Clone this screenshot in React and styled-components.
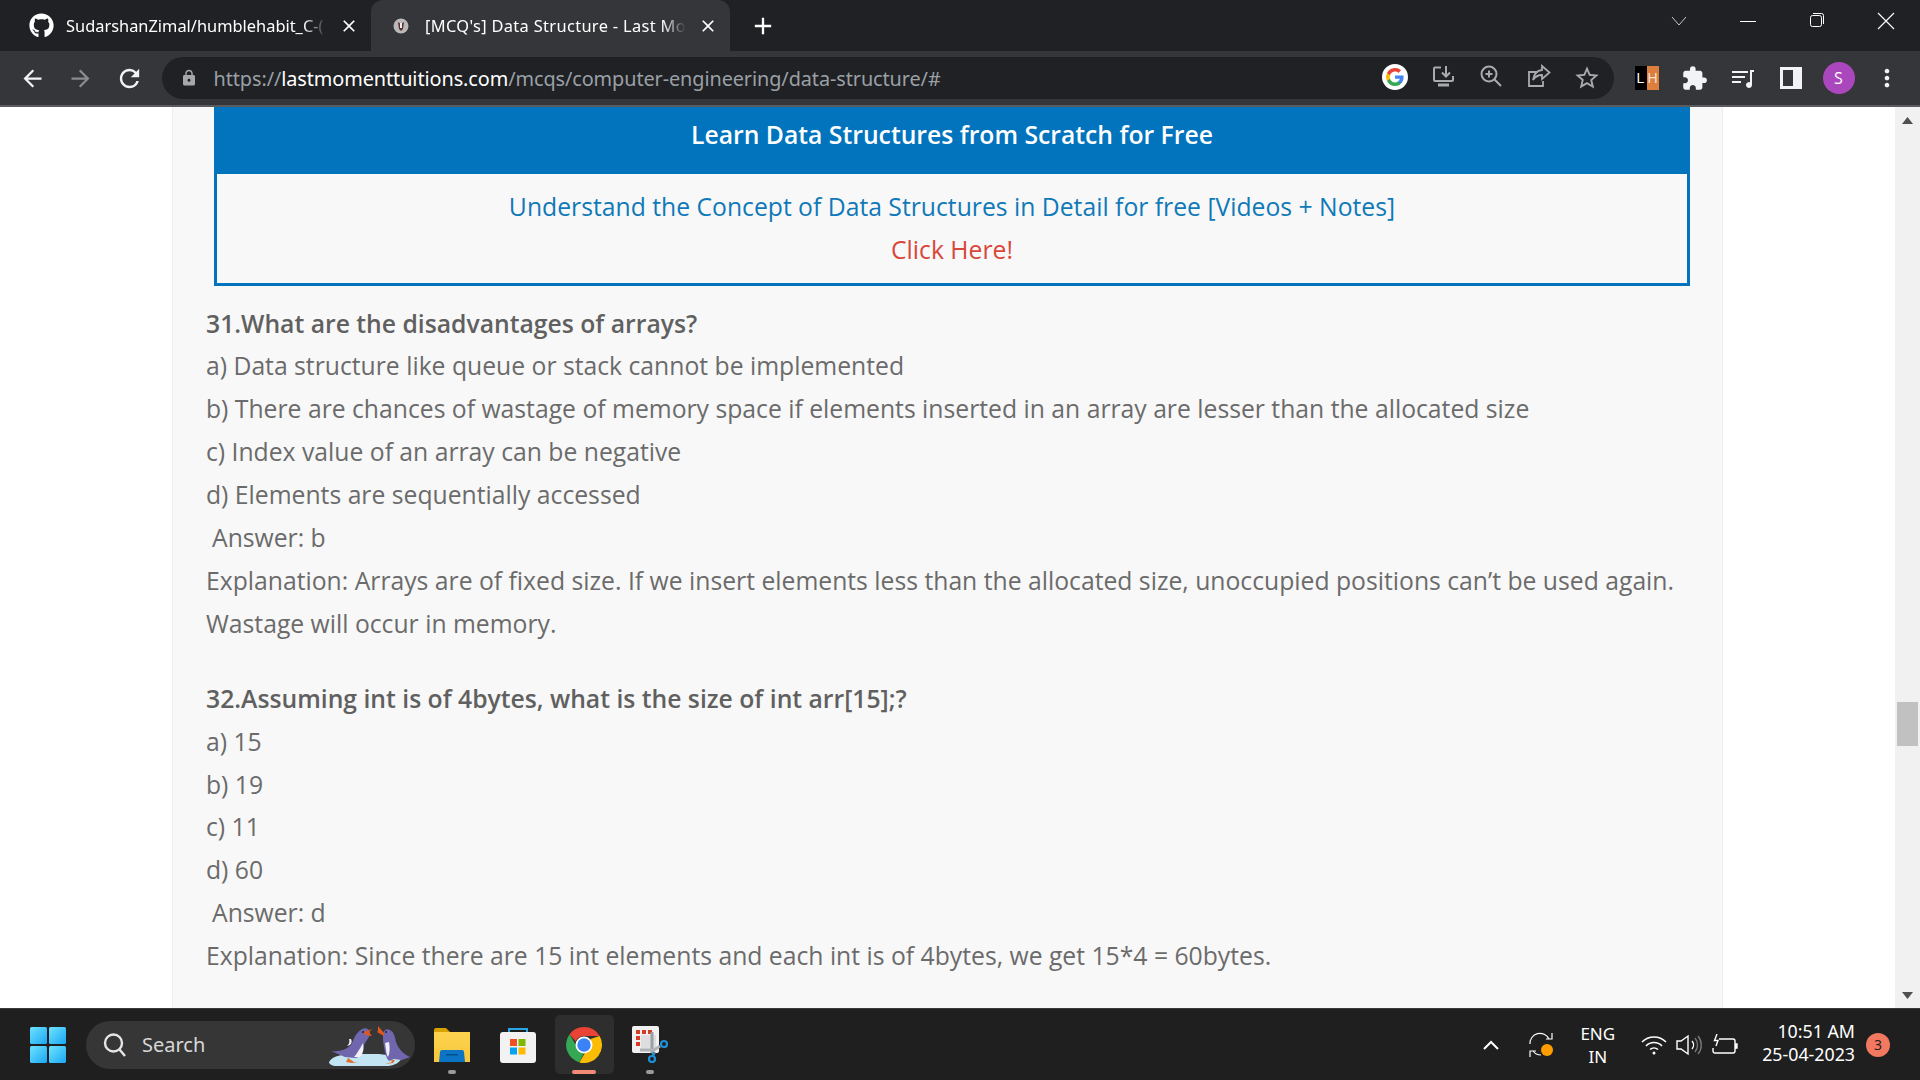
import React from "react";
import styled, { createGlobalStyle } from "styled-components";
import { FaGithub } from "react-icons/fa";
import {
  MdArrowBack,
  MdArrowForward,
  MdRefresh,
  MdLock,
  MdExtension,
  MdMoreVert,
  MdOutlineStarBorder,
  MdClose,
  MdAdd,
} from "react-icons/md";

const GlobalStyle = createGlobalStyle`
  html, body { margin: 0; padding: 0; height: 100%; overflow: hidden; background: #fff; }
  * { box-sizing: border-box; }
`;

const Screen = styled.div`
  width: 1920px;
  height: 1080px;
  display: flex;
  flex-direction: column;
  overflow: hidden;
  font-family: "Open Sans", "Noto Sans", sans-serif;
`;

/* browser chrome */
const TabStrip = styled.div`
  height: 51px;
  flex: none;
  display: flex;
  align-items: stretch;
  background: #202124;
  color: #fff;
  font-family: "Noto Sans", sans-serif;
  font-size: 16.4px;
`;

const Tab = styled.div`
  width: ${(p) => p.$width}px;
  display: flex;
  align-items: center;
  padding-left: ${(p) => p.$pad}px;
  background: ${(p) => (p.$active ? "#35363a" : "transparent")};
  border-radius: 12px 12px 0 0;
`;

const TabIcon = styled.span`
  width: ${(p) => p.$gap}px;
  flex: none;
  display: flex;
  align-items: center;
`;

const TabTitle = styled.span`
  flex: 1;
  min-width: 0;
  white-space: nowrap;
  overflow: hidden;
  letter-spacing: ${(p) => p.$spacing || 0}px;
  -webkit-mask-image: linear-gradient(to right, #000 calc(100% - 24px), transparent 100%);
  mask-image: linear-gradient(to right, #000 calc(100% - 24px), transparent 100%);
`;

const TabClose = styled.span`
  width: 44px;
  flex: none;
  display: flex;
  justify-content: center;
`;

const NewTab = styled.span`
  margin-left: 19px;
  display: flex;
  align-items: center;
`;

const WindowControls = styled.div`
  margin-left: auto;
  display: flex;
  align-items: flex-start;
  padding-top: 12px;
`;

const WinButton = styled.span`
  width: ${(p) => p.$width}px;
  display: flex;
  justify-content: center;
`;

const Toolbar = styled.div`
  height: 54px;
  flex: none;
  display: flex;
  align-items: center;
  background: #35363a;
  padding-left: 8px;
  color: #fff;
`;

const NavButton = styled.span`
  width: 48.5px;
  flex: none;
  display: flex;
  justify-content: center;
  color: ${(p) => (p.$muted ? "#8a8b8d" : "#f1f3f4")};
`;

const Omnibox = styled.div`
  width: 1452px;
  height: 42px;
  margin-left: 8px;
  display: flex;
  align-items: center;
  background: #202124;
  border-radius: 21px;
  padding-left: 18px;
`;

const LockSlot = styled.span`
  width: 34px;
  display: flex;
  color: #a5a7aa;
`;

const Url = styled.div`
  flex: 1;
  font-family: "Noto Sans", sans-serif;
  font-size: 19.85px;
  color: #9aa0a6;
  white-space: nowrap;
  letter-spacing: -0.08px;
`;

const Host = styled.span`
  color: #fff;
`;

const OmniIcon = styled.span`
  width: 48px;
  display: flex;
  justify-content: center;
  color: #a8aaad;
`;

const OmniActions = styled.div`
  display: flex;
  padding-right: 3px;
`;

const ExtBar = styled.div`
  display: flex;
  align-items: center;
  margin-left: 9px;
`;

const ExtSlot = styled.span`
  width: 48px;
  flex: none;
  display: flex;
  justify-content: center;
  color: #f1f3f4;
`;

const LhBadge = styled.span`
  width: 24px;
  height: 24px;
  display: flex;
  font-size: 14px;
  line-height: 24px;
  text-align: center;
  font-family: "Liberation Sans", sans-serif;
`;

const LhCell = styled.span`
  width: 12px;
  background: ${(p) => p.$bg};
  color: ${(p) => (p.$bg === "#000" ? "#fff" : "#f7e3d2")};
`;

const Avatar = styled.span`
  width: 32px;
  height: 32px;
  border-radius: 50%;
  background: #ab47bc;
  color: #fff;
  font-size: 16px;
  display: flex;
  align-items: center;
  justify-content: center;
`;

const Divider = styled.div`
  height: 2px;
  flex: none;
  background: #5a5b5f;
`;

/* page */
const Viewport = styled.div`
  flex: 1;
  min-height: 0;
  display: flex;
  background: #fff;
`;

const PageArea = styled.div`
  flex: 1;
  min-width: 0;
  overflow: hidden;
  padding-left: 172px;
`;

const Article = styled.main`
  width: 1551px;
  height: 100%;
  background: #f8f8f8;
  border-left: 1px solid #eeeeee;
  border-right: 1px solid #eeeeee;
  padding: 0 33px;
  color: #6b6b6b;
  font-size: 24.73px;
  line-height: 42.9px;
`;

const PromoBox = styled.section`
  width: 1476px;
  margin-left: 8px;
  margin-bottom: 16.5px;
  text-align: center;
`;

const PromoHead = styled.div`
  height: 67px;
  padding-bottom: 11px;
  background: #0274be;
  color: #fff;
  font-weight: 600;
  font-size: 24.73px;
  display: flex;
  align-items: center;
  justify-content: center;
`;

const PromoBody = styled.div`
  height: 112px;
  border: 3px solid #0274be;
  border-top: 0;
  padding-top: 12px;
`;

const PromoLink = styled.div`
  color: ${(p) => p.$color};
`;

const Question = styled.section`
  margin-bottom: 32px;
`;

const QuestionTitle = styled.div`
  font-weight: 600;
  color: #606060;
`;

const Line = styled.div`
  white-space: nowrap;
`;

const AnswerLine = styled(Line)`
  padding-left: 6px;
`;

const ScrollTrack = styled.div`
  width: 25px;
  flex: none;
  background: #f1f1f1;
  display: flex;
  flex-direction: column;
  align-items: center;
  padding-top: 10px;
`;

const ScrollThumb = styled.div`
  width: 21px;
  height: 44px;
  background: #c1c1c1;
  margin-top: 578px;
  margin-bottom: auto;
`;

const ScrollArrow = styled.svg`
  width: 11px;
  height: 7px;
  flex: none;
  margin-bottom: ${(p) => p.$bottom || 0}px;
`;

/* taskbar */
const Taskbar = styled.footer`
  height: 72px;
  flex: none;
  display: flex;
  align-items: center;
  background: #1f1f1f;
  border-top: 1px solid #3a3a3a;
  color: #fff;
  font-family: "Noto Sans", sans-serif;
`;

const StartButton = styled.span`
  margin-left: 30px;
  display: flex;
`;

const SearchPill = styled.div`
  width: 329px;
  height: 48px;
  margin-left: 20px;
  display: flex;
  align-items: center;
  border-radius: 24px;
  background: #363636;
  padding-left: 16px;
  color: #d8d8d8;
  font-size: 20px;
`;

const SearchLabel = styled.span`
  margin-left: 14px;
  flex: 1;
`;

const Penguins = styled.svg`
  width: 84px;
  height: 48px;
  margin-right: 3px;
`;

const TaskApps = styled.div`
  display: flex;
  margin-left: 4px;
`;

const TaskApp = styled.div`
  width: ${(p) => (p.$active ? 59 : 66)}px;
  height: 59px;
  margin: 0 ${(p) => (p.$active ? 3.5 : 0)}px;
  display: flex;
  align-items: center;
  justify-content: center;
  position: relative;
  border-radius: 5px;
  background: ${(p) => (p.$active ? "#2e2e2e" : "transparent")};
`;

const RunDot = styled.span`
  position: absolute;
  bottom: 0;
  left: 50%;
  transform: translateX(-50%);
  width: ${(p) => (p.$active ? 24 : 8)}px;
  height: 4px;
  border-radius: 2px;
  background: ${(p) => (p.$active ? "#f28b74" : "#9a9a9a")};
`;

const Tray = styled.div`
  margin-left: auto;
  display: flex;
  align-items: center;
  padding-right: 30px;
`;

const TrayIcon = styled.span`
  display: flex;
  margin-right: ${(p) => p.$after || 0}px;
`;

const TrayText = styled.div`
  font-size: ${(p) => p.$size}px;
  line-height: 23px;
  text-align: ${(p) => p.$align};
  margin-right: ${(p) => p.$after || 0}px;
  padding-bottom: ${(p) => p.$lift || 0}px;
`;

const NotifyBadge = styled.span`
  width: 24px;
  height: 24px;
  border-radius: 50%;
  background: #f2795f;
  color: #1f1f1f;
  font-size: 14px;
  display: flex;
  align-items: center;
  justify-content: center;
`;

const questions = [
  {
    title: "31.What are the disadvantages of arrays?",
    options: [
      "a) Data structure like queue or stack cannot be implemented",
      "b) There are chances of wastage of memory space if elements inserted in an array are lesser than the allocated size",
      "c) Index value of an array can be negative",
      "d) Elements are sequentially accessed",
    ],
    answer: "Answer: b",
    explanation: [
      "Explanation: Arrays are of fixed size. If we insert elements less than the allocated size, unoccupied positions can’t be used again.",
      "Wastage will occur in memory.",
    ],
  },
  {
    title: "32.Assuming int is of 4bytes, what is the size of int arr[15];?",
    options: ["a) 15", "b) 19", "c) 11", "d) 60"],
    answer: "Answer: d",
    explanation: [
      "Explanation: Since there are 15 int elements and each int is of 4bytes, we get 15*4 = 60bytes.",
    ],
  },
];

const Favicon = () => (
  <svg width="16" height="16" viewBox="0 0 16 16">
    <circle cx="8" cy="8" r="7.5" fill="#b9b9b9" />
    <path d="M5 4l3 2 3-2-1 7-2 2-2-2z" fill="#5a3030" />
    <path d="M7 5h2v5H7z" fill="#eee" />
  </svg>
);

const RestoreIcon = () => (
  <svg width="16" height="16" viewBox="0 0 16 16" fill="none" stroke="#fff" strokeWidth="1">
    <rect x="1.5" y="3.5" width="11" height="11" rx="2" />
    <path d="M4 1.5h8.5a2 2 0 0 1 2 2V12" />
  </svg>
);

const GoogleG = () => (
  <svg width="26" height="26" viewBox="0 0 26 26">
    <circle cx="13" cy="13" r="13" fill="#fff" />
    <path d="M21.6 13.2c0-.6 0-1.2-.2-1.8H13v3.4h4.800a4.100 4.100 0 0 1-1.800 2.700v2.200h2.900c1.700-1.600 2.700-3.900 2.700-6.500z" fill="#4285f4" />
    <path d="M13 22c2.400 0 4.500-.8 5.900-2.200L16 17.500c-.8.500-1.800.9-3 .9-2.300 0-4.300-1.600-5-3.700H5v2.300A9 9 0 0 0 13 22z" fill="#34a853" />
    <path d="M8 14.700a5.400 5.400 0 0 1 0-3.400V9H5a9 9 0 0 0 0 8z" fill="#fbbc05" />
    <path d="M13 7.600c1.300 0 2.500.5 3.400 1.300l2.600-2.600A9 9 0 0 0 5 9l3 2.300c.7-2.100 2.700-3.700 5-3.700z" fill="#ea4335" />
  </svg>
);

const InstallIcon = () => (
  <svg width="24" height="24" viewBox="0 0 24 24" fill="none" stroke="currentColor" strokeWidth="2">
    <path d="M10 3.500H4a1 1 0 0 0-1 1V16a1 1 0 0 0 1 1h17a1 1 0 0 0 1-1v-4" />
    <path d="M15 2v10M11 8.500l4 4 4-4" />
    <path d="M7 21h11" strokeWidth="3" />
  </svg>
);

const ZoomIcon = () => (
  <svg width="24" height="24" viewBox="0 0 24 24" fill="none" stroke="currentColor" strokeWidth="2">
    <circle cx="10" cy="10" r="7.500" />
    <path d="M15.500 15.500L22 22M10 6.500v7M6.500 10h7" />
  </svg>
);

const ShareIcon = () => (
  <svg width="24" height="24" viewBox="0 0 24 24" fill="none" stroke="currentColor" strokeWidth="1.800">
    <path d="M10 8H2v14h14v-5" />
    <path d="M15 2l7.500 6.500L15 15v-4c-4 0-6.500 1-9 5 .7-5 3.500-9.500 9-10z" />
  </svg>
);

const MediaIcon = () => (
  <svg width="24" height="24" viewBox="0 0 24 24" fill="#f1f3f4">
    <path d="M1 5h16v2H1zM1 10h13v2H1zM1 15h9v2H1z" />
    <path d="M19 4h4v2h-2v13a3 3 0 1 1-2-2.800z" />
  </svg>
);

const SidePanelIcon = () => (
  <svg width="22" height="22" viewBox="0 0 22 22">
    <path d="M0 0h22v22H0z" fill="#f1f3f4" />
    <path d="M3 3h10v16H3z" fill="#35363a" />
  </svg>
);

const WindowsLogo = () => (
  <svg width="36" height="36" viewBox="0 0 36 36">
    <defs>
      <linearGradient id="winA" x1="0" y1="0" x2="1" y2="1">
        <stop offset="0" stopColor="#6fe3ff" />
        <stop offset="1" stopColor="#1aa7f5" />
      </linearGradient>
    </defs>
    <rect x="0" y="0" width="17" height="17" rx="1.500" fill="url(#winA)" />
    <rect x="19" y="0" width="17" height="17" rx="1.500" fill="url(#winA)" />
    <rect x="0" y="19" width="17" height="17" rx="1.500" fill="url(#winA)" />
    <rect x="19" y="19" width="17" height="17" rx="1.500" fill="url(#winA)" />
  </svg>
);

const SearchGlass = () => (
  <svg width="26" height="26" viewBox="0 0 26 26" fill="none" stroke="#e6e6e6" strokeWidth="2.400">
    <circle cx="11.500" cy="11" r="8.500" />
    <path d="M17.500 17.500L23 24" />
  </svg>
);

const PenguinArt = () => (
  <Penguins viewBox="8 5 84 48">
    <path d="M9 46c3-5 9-7 20-8h30l24 3c-4 6-8 8-14 9H16c-4 0-7-2-7-4z" fill="#c3e4f2" />
    <path d="M11 35c8 1 15-1 20-6 3-5 3-11 11-16 5-2 8 1 8 5-1 5-5 7-6 12 0 6-3 11-9 12l-10-1z" fill="#6f66ad" />
    <path d="M34 41c3-3 6-9 9-14 1 6 0 11-3 14z" fill="#f1eff8" />
    <path d="M29 23c1 3 0 5-2 7l3-1c2-2 2-4 1-6z" fill="#eef" />
    <path d="M44 16l8-3-3 3 3 4-7-1z" fill="#e0561f" />
    <circle cx="43" cy="16" r="1" fill="#222" />
    <path d="M28 42l6 4 4 0-6 1-6-1z" fill="#e0702a" />
    <path d="M63 19c0-5 4-7 7-5 4 2 5 7 6 12 2 6 7 12 14 15l-8 3-8-1-5 2c-3-3-4-8-5-14-1-5-1-8-1-12z" fill="#6f66ad" />
    <path d="M65 27c1 5 1 11 3 14 2-4 2-10 1-15z" fill="#f1eff8" />
    <path d="M64 17l-6-7 0 5-1 1 7 4z" fill="#e0561f" />
    <circle cx="66" cy="16" r="1" fill="#222" />
    <path d="M71 44l1 2-7 2 8-1 2-3z" fill="#e0702a" />
  </Penguins>
);

const FolderIcon = () => (
  <svg width="36" height="34" viewBox="0 0 36 34">
    <defs>
      <linearGradient id="folderFront" x1="0" y1="0" x2="0" y2="1">
        <stop offset="0" stopColor="#fcd34f" />
        <stop offset="1" stopColor="#f8c73a" />
      </linearGradient>
    </defs>
    <path d="M0 2a2 2 0 0 1 2-2h10l4 4h-16z" fill="#d9a200" />
    <path d="M0 4h36v30H0z" fill="url(#folderFront)" />
    <path d="M6 24a2 2 0 0 1 2-2h20a2 2 0 0 1 2 2l1 10H5z" fill="#0c74c4" />
    <path d="M12 26h12v1.500H12z" fill="#074f8c" />
  </svg>
);

const StoreIcon = () => (
  <svg width="36" height="36" viewBox="0 0 36 36">
    <path d="M9 8V2h18v6" fill="none" stroke="#2aa5e8" strokeWidth="2" />
    <rect x="0" y="5" width="36" height="31" rx="3" fill="#f2f2f2" />
    <rect x="10" y="12" width="7" height="7" fill="#f25022" />
    <rect x="18.500" y="12" width="7" height="7" fill="#7fba00" />
    <rect x="10" y="20.500" width="7" height="7" fill="#00a4ef" />
    <rect x="18.500" y="20.500" width="7" height="7" fill="#ffb900" />
  </svg>
);

const ChromeIcon = () => (
  <svg width="36" height="36" viewBox="0 0 36 36">
    <path d="M18 0a18 18 0 0 1 15.600 9H18a9 9 0 0 0-8.300 5.500L3.600 7.200A18 18 0 0 1 18 0z" fill="#ea4335" />
    <path d="M3.600 7.200l7.800 13.500a8 8 0 0 0 6.600 5.300l-4.600 9.300A18 18 0 0 1 3.600 7.200z" fill="#34a853" />
    <path d="M33.600 9A18 18 0 0 1 13.400 35.400l7.800-13.500A9 9 0 0 0 24.400 12z" fill="#fbbc05" />
    <circle cx="18" cy="18" r="8.500" fill="#fff" />
    <circle cx="18" cy="18" r="6.700" fill="#3b82f6" />
  </svg>
);

const SnipIcon = () => (
  <svg width="36" height="37" viewBox="0 0 36 37" fill="none">
    <rect x="0" y="0" width="27" height="27" rx="2" fill="#f1f1f1" />
    <path d="M4 4h4v4H4zM10 4h4v4h-4zM16 4h4v4h-4zM4 10h4v4H4zM4 16h4v4H4z" fill="#d83b25" />
    <rect x="9" y="9" width="15" height="15" fill="#dedede" />
    <path d="M20 6v20l3 2" stroke="#9aa0a6" strokeWidth="3" />
    <path d="M8 24h14l6-4" stroke="#b0b4b8" strokeWidth="3" />
    <path d="M22 26l-1 4" stroke="#1e90d8" strokeWidth="2.500" />
    <circle cx="32" cy="18" r="3" stroke="#1e90d8" strokeWidth="2.200" />
    <circle cx="20" cy="33" r="3" stroke="#1e90d8" strokeWidth="2.200" />
  </svg>
);

const ChevronUp = () => (
  <svg width="18" height="12" viewBox="0 0 18 12" fill="none" stroke="#fff" strokeWidth="2">
    <path d="M2 10l7-7 7 7" />
  </svg>
);

const SyncIcon = () => (
  <svg width="26" height="26" viewBox="0 0 26 26" fill="none" stroke="#fff" strokeWidth="1.200">
    <path d="M1 12a10 10 0 0 1 19-5M23 1v6h-6" />
    <path d="M12 23c-3 0-6-1-8-4M1 25v-6h6" />
    <circle cx="18" cy="18" r="6" fill="#ff9d00" stroke="none" />
  </svg>
);

const WifiIcon = () => (
  <svg width="26" height="20" viewBox="0 0 26 20" fill="none" stroke="#fff" strokeWidth="1.600">
    <path d="M1 7a17 17 0 0 1 24 0M5 11a11 11 0 0 1 16 0M9 14.500a6 6 0 0 1 8 0" />
    <circle cx="13" cy="18" r="1.500" fill="#fff" stroke="none" />
  </svg>
);

const VolumeIcon = () => (
  <svg width="26" height="22" viewBox="0 0 26 22" fill="none" stroke="#fff" strokeWidth="1.400">
    <path d="M1 7h4l7-5v18l-7-5H1z" />
    <path d="M16 7a6 6 0 0 1 0 8" />
    <path d="M19 4a11 11 0 0 1 0 14M22 2a14 14 0 0 1 0 18" stroke="#777" />
  </svg>
);

const BatteryIcon = () => (
  <svg width="26" height="22" viewBox="0 0 26 22" fill="none" stroke="#fff" strokeWidth="1.400">
    <path d="M7 5h14a2 2 0 0 1 2 2v10a2 2 0 0 1-2 2H3a2 2 0 0 1-2-2v-3" />
    <path d="M23 10h2v4h-2" fill="#fff" />
    <path d="M5 0L2.500 6.500H6L4 12" />
  </svg>
);

export default function App() {
  return (
    <Screen>
      <GlobalStyle />
      <TabStrip>
        <Tab $width={371} $pad={29}>
          <TabIcon $gap={37}>
            <FaGithub size={25} />
          </TabIcon>
          <TabTitle>SudarshanZimal/humblehabit_C-(</TabTitle>
          <TabClose>
            <MdClose size={20} />
          </TabClose>
        </Tab>
        <Tab $width={359} $active $pad={22}>
          <TabIcon $gap={32}>
            <Favicon />
          </TabIcon>
          <TabTitle $spacing={0.34}>[MCQ's] Data Structure - Last Mo</TabTitle>
          <TabClose>
            <MdClose size={20} />
          </TabClose>
        </Tab>
        <NewTab>
          <MdAdd size={28} />
        </NewTab>
        <WindowControls>
          <WinButton $width={68}>
            <svg width="16" height="20" viewBox="0 0 16 20" fill="none" stroke="#c8c8c8">
              <path d="M1 5l7 8 7-8" />
            </svg>
          </WinButton>
          <WinButton $width={69}>
            <svg width="16" height="20" viewBox="0 0 16 20" fill="none" stroke="#fff">
              <path d="M0 9.500h16" />
            </svg>
          </WinButton>
          <WinButton $width={70}>
            <RestoreIcon />
          </WinButton>
          <WinButton $width={68}>
            <svg width="18" height="18" viewBox="0 0 18 18" fill="none" stroke="#fff" strokeWidth="1.100">
              <path d="M1 1l16 16M17 1L1 17" />
            </svg>
          </WinButton>
        </WindowControls>
      </TabStrip>
      <Toolbar>
        <NavButton>
          <MdArrowBack size={27} />
        </NavButton>
        <NavButton $muted>
          <MdArrowForward size={27} />
        </NavButton>
        <NavButton>
          <MdRefresh size={29} />
        </NavButton>
        <Omnibox>
          <LockSlot>
            <MdLock size={18} />
          </LockSlot>
          <Url>
            https://<Host>lastmomenttuitions.com</Host>/mcqs/computer-engineering/data-structure/#
          </Url>
          <OmniActions>
            <OmniIcon>
              <GoogleG />
            </OmniIcon>
            <OmniIcon>
              <InstallIcon />
            </OmniIcon>
            <OmniIcon>
              <ZoomIcon />
            </OmniIcon>
            <OmniIcon>
              <ShareIcon />
            </OmniIcon>
            <OmniIcon>
              <MdOutlineStarBorder size={28} />
            </OmniIcon>
          </OmniActions>
        </Omnibox>
        <ExtBar>
          <ExtSlot>
            <LhBadge>
              <LhCell $bg="#000">L</LhCell>
              <LhCell $bg="#dc7f3e">H</LhCell>
            </LhBadge>
          </ExtSlot>
          <ExtSlot>
            <MdExtension size={27} />
          </ExtSlot>
          <ExtSlot>
            <MediaIcon />
          </ExtSlot>
          <ExtSlot>
            <SidePanelIcon />
          </ExtSlot>
          <ExtSlot>
            <Avatar>S</Avatar>
          </ExtSlot>
          <ExtSlot>
            <MdMoreVert size={28} />
          </ExtSlot>
        </ExtBar>
      </Toolbar>
      <Divider />
      <Viewport>
        <PageArea>
          <Article>
            <PromoBox>
              <PromoHead>Learn Data Structures from Scratch for Free</PromoHead>
              <PromoBody>
                <PromoLink $color="#1079b8">
                  Understand the Concept of Data Structures in Detail for free [Videos + Notes]
                </PromoLink>
                <PromoLink $color="#d9473a">Click Here!</PromoLink>
              </PromoBody>
            </PromoBox>
            {questions.map((q) => (
              <Question key={q.title}>
                <QuestionTitle>{q.title}</QuestionTitle>
                {q.options.map((o) => (
                  <Line key={o}>{o}</Line>
                ))}
                <AnswerLine>{q.answer}</AnswerLine>
                {q.explanation.map((e) => (
                  <Line key={e}>{e}</Line>
                ))}
              </Question>
            ))}
          </Article>
        </PageArea>
        <ScrollTrack>
          <ScrollArrow viewBox="0 0 11 7">
            <path d="M5.500 0L11 7H0z" fill="#505050" />
          </ScrollArrow>
          <ScrollThumb />
          <ScrollArrow viewBox="0 0 11 7" $bottom={9}>
            <path d="M0 0h11L5.500 7z" fill="#505050" />
          </ScrollArrow>
        </ScrollTrack>
      </Viewport>
      <Taskbar>
        <StartButton>
          <WindowsLogo />
        </StartButton>
        <SearchPill>
          <SearchGlass />
          <SearchLabel>Search</SearchLabel>
          <PenguinArt />
        </SearchPill>
        <TaskApps>
          <TaskApp>
            <FolderIcon />
            <RunDot />
          </TaskApp>
          <TaskApp>
            <StoreIcon />
          </TaskApp>
          <TaskApp $active>
            <ChromeIcon />
            <RunDot $active />
          </TaskApp>
          <TaskApp>
            <SnipIcon />
            <RunDot />
          </TaskApp>
        </TaskApps>
        <Tray>
          <TrayIcon $after={29}>
            <ChevronUp />
          </TrayIcon>
          <TrayIcon $after={25}>
            <SyncIcon />
          </TrayIcon>
          <TrayText $size={17} $align="center" $after={26}>
            ENG
            <br />
            IN
          </TrayText>
          <TrayIcon $after={9}>
            <WifiIcon />
          </TrayIcon>
          <TrayIcon $after={10}>
            <VolumeIcon />
          </TrayIcon>
          <TrayIcon $after={24}>
            <BatteryIcon />
          </TrayIcon>
          <TrayText $size={17.8} $align="right" $after={11} $lift={3}>
            10:51 AM
            <br />
            25-04-2023
          </TrayText>
          <NotifyBadge>3</NotifyBadge>
        </Tray>
      </Taskbar>
    </Screen>
  );
}
